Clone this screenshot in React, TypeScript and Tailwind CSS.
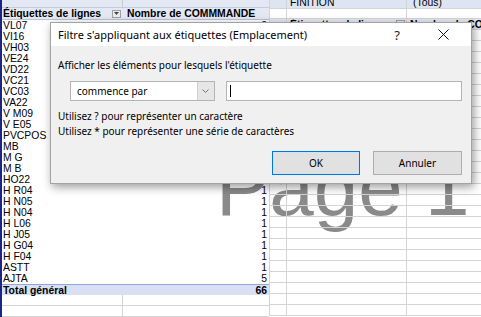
import React from "react";

const rows: [string, number][] = [
  ["VL07", 3], ["VI16", 2], ["VH03", 4], ["VE24", 3], ["VD22", 5], ["VC21", 2],
  ["VC03", 4], ["VA22", 3], ["V M09", 6], ["V E05", 4], ["PVCPOS", 8], ["MB", 2],
  ["M G", 3], ["M B", 2], ["HO22", 2], ["H R04", 1], ["H N05", 1], ["H N04", 1],
  ["H L06", 1], ["H J05", 1], ["H G04", 1], ["H F04", 1], ["ASTT", 1], ["AJTA", 5],
];

const XL = "font-['Liberation_Sans',Arial,sans-serif]";
const UI = "font-['Noto_Sans',sans-serif]";

function FilterBtn() {
  return (
    <div className="w-[9px] h-[8px] bg-[#ececec] border border-[#a0a0a0] flex items-center justify-center">
      <svg width="5" height="3" viewBox="0 0 5 3">
        <path d="M0 0 H5 L2.5 3 Z" fill="#444" />
      </svg>
    </div>
  );
}

function LeftPane() {
  return (
    <div className={`flex flex-col w-[269px] shrink-0 border-l-2 border-[#1c2586] text-[10.4px] leading-[11px] text-black ${XL}`}>
      <div className="flex h-[8px] shrink-0 bg-[#e3e8f3] border-b border-[#c2cbe0]">
        <div className="w-[121px] border-r border-[#c2cbe0]" />
        <div className="flex-1" />
      </div>
      <div className="flex h-[12px] shrink-0 bg-[#e3e8f3] border-b border-[#b8c3dc] font-bold">
        <div className="w-[121px] flex items-center justify-between pl-px pr-[2px]">
          <span>Étiquettes de lignes</span>
          <FilterBtn />
        </div>
        <div className="flex-1 pl-[4px] whitespace-nowrap">Nombre de COMMMANDE</div>
      </div>
      {rows.map(([label, v]) => (
        <div key={label} className="flex h-[11px] shrink-0">
          <div className="w-[121px] pl-px whitespace-nowrap">{label}</div>
          <div className="flex-1 text-right pr-[2px]">{v}</div>
        </div>
      ))}
      <div className="flex h-[11px] shrink-0 bg-[#d9e0f3] border-t border-[#8fa8d8] font-bold">
        <div className="w-[121px] pl-px">Total général</div>
        <div className="flex-1 text-right pr-[2px]">66</div>
      </div>
      {[0, 1, 2].map((i) => (
        <div key={i} className="flex h-[11px] shrink-0 border-b border-[#d4d4d4]">
          <div className="w-[121px] border-r border-[#d4d4d4]" />
          <div className="flex-1" />
        </div>
      ))}
    </div>
  );
}

function GridRow({ h, children, bg }: { h: string; children?: React.ReactNode[]; bg?: string }) {
  const c = children ?? [null, null, null];
  return (
    <div className={`flex shrink-0 ${h} ${bg ?? ""}`}>
      <div className="w-[18px] border-l border-r border-b border-[#d4d4d4]">{c[0]}</div>
      <div className="w-[120px] border-r border-b border-[#d4d4d4] overflow-hidden">{c[1]}</div>
      <div className="flex-1 border-b border-[#d4d4d4] overflow-hidden">{c[2]}</div>
    </div>
  );
}

function RightPane() {
  return (
    <div className={`flex flex-col flex-1 text-[10.4px] leading-[11px] text-black ${XL}`}>
      <GridRow h="h-[9px]" bg="bg-[#dce5f1]">
        {[
          null,
          <div className="h-full flex items-end pl-[3px] -mb-px">FINITION</div>,
          <div className="h-full flex items-end pl-[6px] -mb-px">(Tous)</div>,
        ]}
      </GridRow>
      <GridRow h="h-[10px]" />
      <GridRow h="h-[11px]" bg="bg-[#e3e8f3]">
        {[
          null,
          <div className="h-full flex items-center justify-between pl-[3px] pr-[1px] font-bold whitespace-nowrap">
            <span>Étiquettes de lignes</span>
            <FilterBtn />
          </div>,
          <div className="pl-[3px] font-bold whitespace-nowrap">Nombre de COMMMANDE</div>,
        ]}
      </GridRow>
      {Array.from({ length: 26 }).map((_, i) => (
        <GridRow key={i} h="h-[11px]" />
      ))}
    </div>
  );
}

function Dialog() {
  return (
    <div className={`absolute left-[50px] top-[22px] z-20 w-[422px] h-[162px] flex flex-col bg-[#f0f0f0] border border-[#a3a3a3] shadow-[2px_3px_9px_rgba(0,0,0,0.4)] text-black ${UI}`}>
      <div className="h-[23px] shrink-0 bg-white flex items-center">
        <span className="flex-1 pl-[7px] text-[11px] leading-[16px] whitespace-nowrap">
          Filtre s'appliquant aux étiquettes (Emplacement)
        </span>
        <div className="w-[46px] flex justify-center text-[13px] leading-[16px] text-[#222]">?</div>
        <div className="w-[46px] flex justify-center">
          <svg width="11" height="11" viewBox="0 0 11 11">
            <path d="M0.5 0.5 L10.5 10.5 M10.5 0.5 L0.5 10.5" stroke="#111" strokeWidth="1" />
          </svg>
        </div>
        <div className="w-[5px]" />
      </div>
      <div className="flex flex-col pl-[7px] pr-[9px] text-[10px] leading-[15px]">
        <div className="mt-[12px] flex items-center">
          <span className="whitespace-nowrap">Afficher les éléments pour lesquels l'étiquette</span>
        </div>
        <div className="mt-[8px] flex items-center pl-[12px] gap-[11px]">
          <div className="w-[145px] h-[20px] flex bg-white border border-[#b4b4b4]">
            <span className="flex-1 pl-[6px] leading-[18px] whitespace-nowrap">commence par</span>
            <div className="w-[17px] bg-[#e6e6e6] border-l border-[#d0d0d0] flex items-center justify-center">
              <svg width="7" height="4" viewBox="0 0 7 4">
                <path d="M0.5 0.5 L3.5 3.5 L6.5 0.5" stroke="#707070" fill="none" strokeWidth="1" />
              </svg>
            </div>
          </div>
          <div className="w-[237px] h-[20px] flex items-center pl-[3px] bg-white border border-[#b4b4b4]">
            <div className="w-px h-[12px] bg-black" />
          </div>
        </div>
        <p className="mt-[8px] whitespace-nowrap">Utilisez ? pour représenter un caractère</p>
        <p className="whitespace-nowrap">Utilisez * pour représenter une série de caractères</p>
        <div className="mt-[12px] flex justify-end gap-[13px]">
          <button className="w-[88px] h-[24px] bg-[#e1e1e1] border border-[#0078d7] shadow-[inset_0_0_0_1px_#cfe3f5] text-[10px]">
            OK
          </button>
          <button className="w-[89px] h-[24px] bg-[#e1e1e1] border border-[#adadad] text-[10px]">
            Annuler
          </button>
        </div>
      </div>
    </div>
  );
}

export default function App() {
  return (
    <div className="relative isolate w-[481px] h-[317px] overflow-hidden bg-white">
      <div className={`absolute left-[216px] top-[148px] z-0 text-[80px] leading-none text-[#8a8a8a] whitespace-nowrap ${XL}`}>
        Page 1
      </div>
      <div className="relative z-10 flex h-full">
        <LeftPane />
        <RightPane />
      </div>
      <Dialog />
    </div>
  );
}
